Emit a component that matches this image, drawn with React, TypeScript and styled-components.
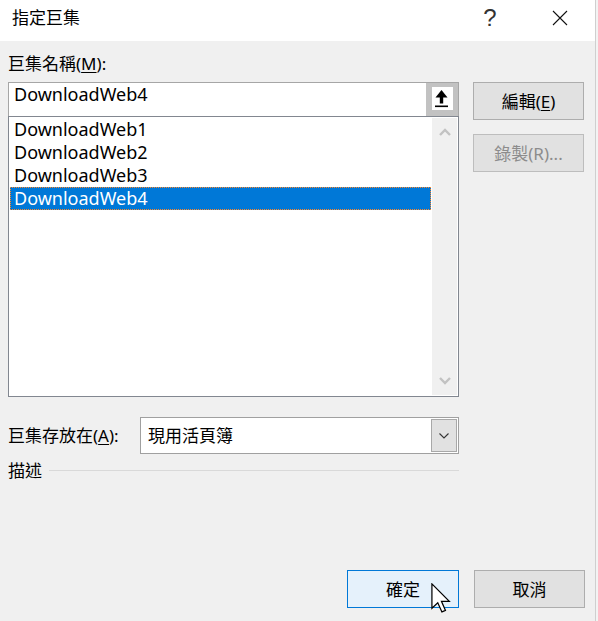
import React from "react";
import styled, { createGlobalStyle } from "styled-components";

const FONT = `"Noto Sans", "Noto Sans CJK TC", sans-serif`;

const GlobalStyle = createGlobalStyle`
    html, body {
        margin: 0;
        padding: 0;
        background: #f0f0f0;
    }
    body {
        font-family: ${FONT};
        color: #000;
    }
`;

const Window = styled.div`
    display: flex;
    width: 598px;
    height: 621px;
    overflow: hidden;
`;

const Dialog = styled.div`
    display: flex;
    flex-direction: column;
    width: 595px;
    flex-shrink: 0;
    background: #f0f0f0;
`;

const SheetEdge = styled.div`
    flex: 1;
    background: #f3f3f3;
    border-left: 1px solid #cfcfcf;
`;

const TitleBar = styled.div`
    display: flex;
    align-items: flex-start;
    height: 41px;
    box-sizing: border-box;
    padding: 6px 12px 0 12px;
    background: #fff;
`;

const Title = styled.div`
    flex: 1;
    font-size: 17px;
    line-height: 23px;
`;

const CaptionButton = styled.div<{ $gap?: number }>`
    display: flex;
    align-items: center;
    justify-content: center;
    width: 46px;
    height: 23px;
    margin-right: ${(p) => p.$gap ?? 0}px;
    font-family: "Liberation Sans", sans-serif;
    font-size: 24px;
    font-weight: 400;
    color: #333;
`;

const Body = styled.div`
    flex: 1;
    display: flex;
    flex-direction: column;
    padding: 0 10px 13px 8px;
`;

const FieldLabel = styled.div`
    margin-top: 11px;
    font-size: 17px;
    line-height: 23px;
`;

const Key = styled.span`
    text-decoration: underline;
    text-underline-offset: 2px;
`;

const MainRow = styled.div`
    display: flex;
    gap: 14px;
    margin-top: 7px;
`;

const LeftCol = styled.div`
    display: flex;
    flex-direction: column;
    width: 451px;
`;

const NameInput = styled.div`
    display: flex;
    height: 34px;
    box-sizing: border-box;
    border: 1px solid #a6a6a6;
    border-bottom: none;
    background: #fff;
`;

const NameText = styled.div`
    flex: 1;
    padding: 0 5px;
    font-size: 18px;
    line-height: 22px;
`;

const PinBox = styled.div`
    display: flex;
    width: 32px;
    box-sizing: border-box;
    padding: 4px 5px 6px 6px;
    background: #c2c2c2;
`;

const PinFace = styled.div`
    flex: 1;
    display: flex;
    background: #fff;
`;

const List = styled.div`
    display: flex;
    height: 281px;
    box-sizing: border-box;
    border: 1px solid #828790;
    background: #fff;
`;

const Rows = styled.div`
    flex: 1;
    display: flex;
    flex-direction: column;
    padding: 1px 1px 0 1px;
`;

const Row = styled.div<{ $selected?: boolean }>`
    height: 23px;
    box-sizing: border-box;
    padding-left: 4px;
    font-size: 18px;
    line-height: 23px;
    color: ${(p) => (p.$selected ? "#fff" : "#000")};
    background: ${(p) => (p.$selected ? "#0078d7" : "transparent")};
    outline: ${(p) => (p.$selected ? "1px dotted #ff8728" : "none")};
    outline-offset: -1px;
`;

const ScrollTrack = styled.div`
    display: flex;
    flex-direction: column;
    justify-content: space-between;
    width: 25px;
    margin: 1px 1px 1px 0;
    background: #f0f0f0;
`;

const ScrollArrow = styled.div`
    display: flex;
    align-items: center;
    justify-content: center;
    height: 28px;
`;

const SideCol = styled.div`
    display: flex;
    flex-direction: column;
    gap: 14px;
`;

const PushButton = styled.div<{ $kind?: "default" | "primary" | "disabled" }>`
    position: relative;
    display: flex;
    align-items: center;
    justify-content: center;
    width: ${(p) => (p.$kind === "primary" ? 112 : 111)}px;
    height: 38px;
    box-sizing: border-box;
    font-size: 17px;
    line-height: 23px;
    color: ${(p) => (p.$kind === "disabled" ? "#8c8c8c" : "#000")};
    background: ${(p) => (p.$kind === "primary" ? "#e5f1fb" : "#e1e1e1")};
    border: 1px solid
        ${(p) => (p.$kind === "primary" ? "#0078d7" : p.$kind === "disabled" ? "#bdbdbd" : "#adadad")};
`;

const StoreRow = styled.div`
    display: flex;
    align-items: center;
    margin-top: 20px;
`;

const StoreLabel = styled.div`
    width: 132px;
    font-size: 17px;
    line-height: 23px;
`;

const Combo = styled.div`
    display: flex;
    align-items: center;
    width: 319px;
    height: 37px;
    box-sizing: border-box;
    padding: 1px;
    border: 1px solid #a0a0a0;
    background: #fff;
`;

const ComboText = styled.div`
    flex: 1;
    padding-left: 6px;
    font-size: 17px;
    line-height: 23px;
`;

const ComboButton = styled.div`
    display: flex;
    align-items: center;
    justify-content: center;
    width: 26px;
    height: 33px;
    box-sizing: border-box;
    border: 1px solid #a8a8a8;
    background: #e1e1e1;
`;

const DescRow = styled.div`
    display: flex;
    align-items: center;
    gap: 7px;
    width: 451px;
    height: 23px;
    margin-top: 5px;
    font-size: 17px;
    line-height: 23px;
`;

const Rule = styled.div`
    flex: 1;
    height: 1px;
    background: #d9d9d9;
`;

const Footer = styled.div`
    display: flex;
    justify-content: flex-end;
    gap: 15px;
    margin-top: auto;
`;

const Pointer = styled.svg`
    position: absolute;
    left: 83px;
    top: 12px;
`;

const Chevron = ({ up, color }: { up?: boolean; color: string }) => (
    <svg width="12" height="8" viewBox="0 0 12 8">
        <polyline
            points={up ? "1,7 6,2 11,7" : "1,1 6,6 11,1"}
            fill="none"
            stroke={color}
            strokeWidth="2.4"
        />
    </svg>
);

const macros = ["DownloadWeb1", "DownloadWeb2", "DownloadWeb3", "DownloadWeb4"];

const App = (): JSX.Element => {
    return (
        <Window>
            <GlobalStyle />
            <Dialog>
                <TitleBar>
                    <Title>指定巨集</Title>
                    <CaptionButton $gap={24}>?</CaptionButton>
                    <CaptionButton>
                        <svg width="16" height="16" viewBox="0 0 16 16">
                            <path d="M1 1 L15 15 M15 1 L1 15" stroke="#111" strokeWidth="1.1" />
                        </svg>
                    </CaptionButton>
                </TitleBar>
                <Body>
                    <FieldLabel>
                        巨集名稱(<Key>M</Key>):
                    </FieldLabel>
                    <MainRow>
                        <LeftCol>
                            <NameInput>
                                <NameText>DownloadWeb4</NameText>
                                <PinBox>
                                    <PinFace>
                                        <svg width="21" height="23" viewBox="0 0 21 23">
                                            <path d="M9.5 3 L3.5 10.5 H15.5 Z" fill="#000" />
                                            <rect x="7.8" y="10" width="3.4" height="6.5" fill="#000" />
                                            <rect x="3" y="18.5" width="13" height="1.6" fill="#000" />
                                        </svg>
                                    </PinFace>
                                </PinBox>
                            </NameInput>
                            <List>
                                <Rows>
                                    {macros.map((m, i) => (
                                        <Row key={m} $selected={i === macros.length - 1}>
                                            {m}
                                        </Row>
                                    ))}
                                </Rows>
                                <ScrollTrack>
                                    <ScrollArrow>
                                        <Chevron up color="#c2c2c2" />
                                    </ScrollArrow>
                                    <ScrollArrow>
                                        <Chevron color="#c2c2c2" />
                                    </ScrollArrow>
                                </ScrollTrack>
                            </List>
                        </LeftCol>
                        <SideCol>
                            <PushButton>
                                <span>
                                    編輯(<Key>E</Key>)
                                </span>
                            </PushButton>
                            <PushButton $kind="disabled">錄製(R)...</PushButton>
                        </SideCol>
                    </MainRow>
                    <StoreRow>
                        <StoreLabel>
                            巨集存放在(<Key>A</Key>):
                        </StoreLabel>
                        <Combo>
                            <ComboText>現用活頁簿</ComboText>
                            <ComboButton>
                                <svg width="10" height="6" viewBox="0 0 10 6">
                                    <polyline points="0.5,0.5 5,5 9.5,0.5" fill="none" stroke="#333" strokeWidth="1.1" />
                                </svg>
                            </ComboButton>
                        </Combo>
                    </StoreRow>
                    <DescRow>
                        描述
                        <Rule />
                    </DescRow>
                    <Footer>
                        <PushButton $kind="primary">
                            確定
                            <Pointer width="20" height="30" viewBox="0 0 13 19.5">
                                <path
                                    d="M0.6 0.6 V16.4 L4.4 12.8 L7.1 18.8 L9.4 17.8 L6.8 11.9 H11.9 Z"
                                    fill="#fff"
                                    stroke="#000"
                                    strokeWidth="0.8"
                                    strokeLinejoin="miter"
                                />
                            </Pointer>
                        </PushButton>
                        <PushButton>取消</PushButton>
                    </Footer>
                </Body>
            </Dialog>
            <SheetEdge />
        </Window>
    );
};

export default App;
